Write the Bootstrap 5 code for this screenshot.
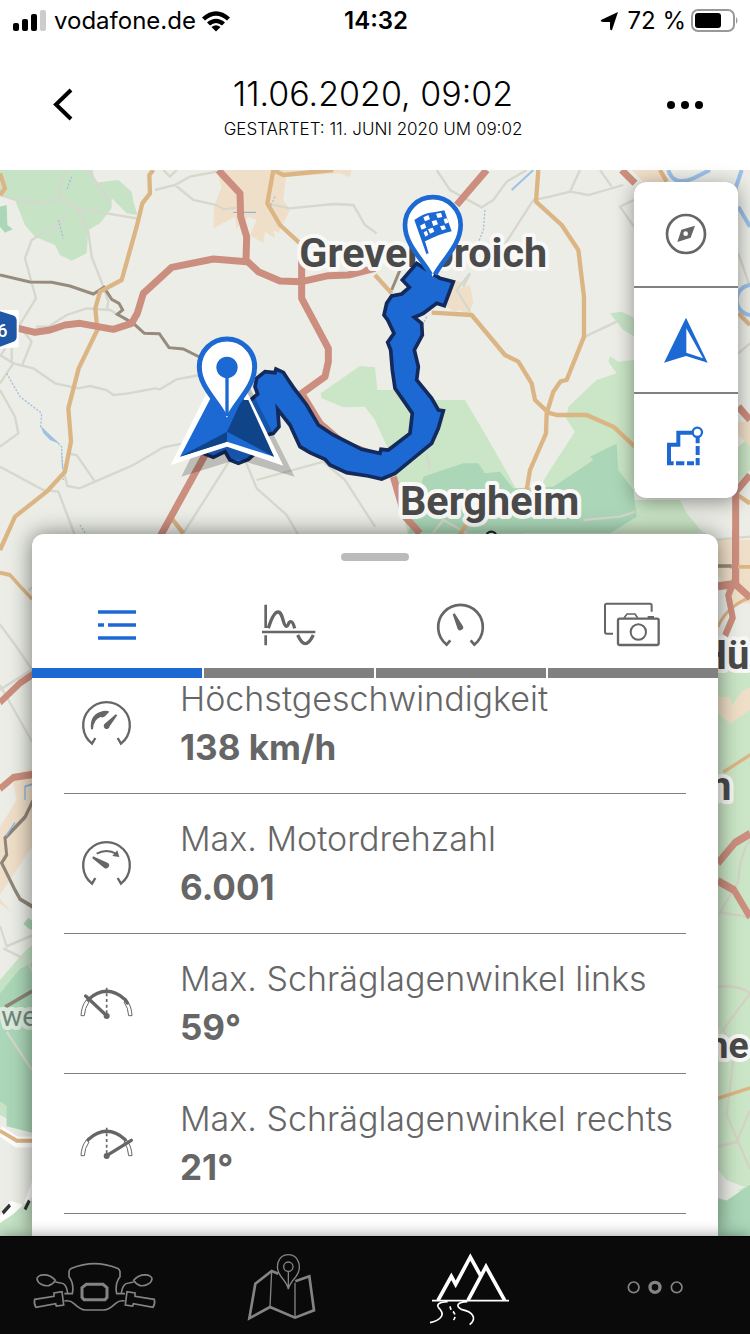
<!DOCTYPE html>
<html lang="de">
<head>
<meta charset="utf-8">
<meta name="viewport" content="width=device-width, initial-scale=1">
<title>Tour 11.06.2020</title>
<link href="https://cdn.jsdelivr.net/npm/bootstrap@5.3.0/dist/css/bootstrap.min.css" rel="stylesheet">
<style>
:root { --blue: #1c69d4; --ink: #666; --rule: #808080; }
body { font-family: Inter, "Liberation Sans", sans-serif; color: #000; background: #fff; }
svg { display: block; flex: none; }
.status-row { height: 42px; padding: 0 10px 0 12px; font-size: 24px; line-height: 42px; }
.status-row .side { flex: 1 1 0; }
.title-row { height: 128px; padding: 0 35px; }
.tour-title { font-size: 34px; line-height: 46px; font-weight: 300; }
.tour-sub { font-size: 17px; line-height: 24px; font-weight: 300; }
.plain-btn { border: 0; background: none; padding: 0; color: inherit; }
.map-area { background: #ebede6; min-height: 0; }
.map-canvas { position: absolute; inset: 0; width: 100%; height: 100%; }
.map-tools { width: 104px; margin: 12px 12px 36px; border-radius: 12px; box-shadow: 0 4px 20px rgba(0,0,0,.4); gap: 2px; background: var(--rule); }
.map-tools button { height: 104px; background: #fff; }
.sheet { margin: 0 32px; border-radius: 12px 12px 0 0; box-shadow: 0 0 22px rgba(0,0,0,.5); min-height: 0; }
.grip { width: 68px; height: 8px; border-radius: 4px; background: #bbb; margin: 19px auto 21px; }
.sheet-tabs { gap: 2px; }
.sheet-tabs button { height: 96px; border-bottom: 10px solid var(--rule); color: var(--ink); }
.sheet-tabs button.active { border-color: var(--blue); color: var(--blue); }
.stats { min-height: 0; padding: 0 32px 60px; overflow-y: auto; scrollbar-width: none; color: var(--ink); font-size: 34px; line-height: 49px; }
.stats::-webkit-scrollbar { display: none; }
.stat { padding: 20px 12px 21px; gap: 44px; border-bottom: 1px solid var(--rule); }
.stat dt { font-weight: 300; }
.stat dd { font-size: 35px; font-weight: 700; margin: 0; }
.tabbar { height: 98px; background: #0a0a0a; color: #848484; position: relative; box-shadow: 0 0 14px rgba(0,0,0,.4); border-top: 1px solid #000; }
.tabbar a { color: inherit; flex: 1 1 0; }
.tabbar a.active { color: #fff; }
.ln { fill: none; stroke: currentColor; }
.place { font-family: Roboto, "Liberation Sans", sans-serif; font-weight: 700; fill: #4a4a4a; stroke: #f8f8f6; stroke-width: 24; stroke-linejoin: round; paint-order: stroke; }
</style>
</head>
<body>
<div class="vh-100 d-flex flex-column overflow-hidden">
  <header>
    <div class="status-row d-flex align-items-center">
      <div class="side d-flex align-items-center">
        <svg width="34" height="24" viewBox="0 0 34 24"><rect x="1" y="14" width="6" height="8" rx="2"/><rect x="10" y="10" width="6" height="12" rx="2"/><rect x="19" y="5" width="6" height="17" rx="2"/><rect x="28" y="1" width="6" height="21" rx="2" fill="#ccc"/></svg>
        <span class="ms-2">vodafone.de</span>
        <svg class="ms-1" width="32" height="24" viewBox="0 0 32 24"><path d="M2 8.500Q16-4 30 8.500L27 11.500Q16 2 5 11.500ZM7 13.500Q16 6 25 13.500L22 16.500Q16 11.500 10 16.500ZM11.500 18Q16 14.500 20.500 18L16 22.500Z"/></svg>
      </div>
      <div class="fw-semibold">14:32</div>
      <div class="side d-flex align-items-center justify-content-end">
        <svg width="20" height="22" viewBox="0 0 20 22"><path d="M19 2 13 20Q11 21 11 18V12H4Q0 11 3 9.500Z"/></svg>
        <span class="ms-2 me-1">72 %</span>
        <svg width="50" height="24" viewBox="0 0 50 24"><rect x="2" y="1" width="42" height="21" rx="6" fill="none" stroke="#999" stroke-width="2"/><rect x="5" y="4" width="26" height="15" rx="3"/><path d="M46 8Q49 11.500 46 15Z" fill="#999"/></svg>
      </div>
    </div>
    <div class="title-row d-flex align-items-center justify-content-between">
      <button class="plain-btn" aria-label="Zurück"><svg width="56" height="56" viewBox="0 0 56 56"><path class="ln" d="M36 12 21 26.500 36 41" stroke-width="4"/></svg></button>
      <div class="text-center">
        <h1 class="tour-title m-0">11.06.2020, 09:02</h1>
        <div class="tour-sub text-uppercase">Gestartet: 11. Juni 2020 um 09:02</div>
      </div>
      <button class="plain-btn" aria-label="Mehr"><svg width="60" height="56" viewBox="0 0 60 56"><circle cx="16" cy="27" r="4"/><circle cx="30" cy="27" r="4"/><circle cx="44" cy="27" r="4"/></svg></button>
    </div>
  </header>

  <main class="map-area position-relative flex-grow-1 d-flex flex-column">
    <svg class="map-canvas" viewBox="0 0 2250 3198" preserveAspectRatio="xMidYMin slice" role="img" aria-label="Karte der Tour">
      <!-- woods and built-up areas -->
      <g fill="#c6e3c6">
        <path d="M0 0H278L285 38 355 30 395 65 400 95 412 135 380 130 335 85 335 115 300 160 265 180 260 250 215 272 180 255 165 225 105 200 75 165 45 90 0 75Z"/>
        <path d="M962 670 1080 588 1125 592 1132 660H1180L1300 690H1395L1460 800 1545 950 1570 1100H1225L1170 850 1125 750 1095 710 1030 712 965 685Z" fill="#cae6c6"/>
        <path d="M1705 710 1790 630 1850 610 1825 575 1830 558 1855 575 1902 570V1090H1540L1650 900 1725 785 1698 745Z" fill="#cae6c6"/>
        <path d="M1830 430 1865 425 1905 445V500L1870 480Z"/>
        <path d="M1900 990H2040L2060 1030 2110 1090H1900ZM2190 880 2215 830 2250 800V900L2200 950Z" fill="#cae6c6"/>
      </g>
      <g fill="#abd7b8">
        <path d="M0 110 20 105 22 165 38 178 15 188 0 170Z"/>
        <path d="M1270 920 1390 880 1435 880 1455 910 1500 905 1540 955 1660 950 1780 870 1770 860 1830 830 1850 822 1855 900 1900 960 1910 1040 1830 1090H1225Z"/>
      </g>
      <g fill="#f0dfc8">
        <path d="M650 0H860L850 90 870 120 835 190 820 180 825 205 795 185 790 220 750 195 770 150 745 140 710 175 705 140 640 175 642 110 665 50Z"/>
        <path d="M840 0H1055L1050 22 1020 10 850 20Z"/>
        <path d="M1300 330 1385 335 1365 360 1410 345 1420 395 1410 425 1440 455 1380 420 1360 425 1330 400Z"/>
        <path d="M1895 0H1985L2000 35 1940 45Z"/>
        <path d="M2130 1110H2250V1300H2190L2150 1200ZM2215 755H2250V830L2210 790Z"/>
      </g>
      <!-- minor roads -->
      <g fill="none" stroke="#d6d7cd" stroke-width="7">
        <path d="M0 75 50 90 130 100 180 85 230 115 410 145M180 85Q170 40 200 0M265 0 330 100M200 125 175 165 95 210 75 265 108 385 0 560M230 115 265 185 275 260 310 350 325 395 320 420M108 470 145 470 200 435 260 415 330 420 365 440M0 555 40 580 100 595 165 640 235 655 270 648 320 660 340 675 385 670 465 655 480 658 530 628 600 615M40 580 0 640M35 580V530M65 590 95 515 60 470M0 660 45 740 55 790 0 830M210 852 230 855 285 935 238 955 202 948 190 900M285 935 400 885 490 832 550 820M0 890 130 960 175 965 230 1110M690 870 550 1090M735 870 770 955 860 1035 895 1095M770 930 970 875 1035 930 1125 1070"/>
        <path d="M465 60 525 45 570 20 650 5M525 45 580 90 650 105 670 118 720 112M800 100 870 115 1000 102 1060 105 1095 165 1130 190M490 0 510 20 530 0M1310 0 1350 60 1445 112 1480 90 1520 35 1580 0M1740 0 1710 65 1650 80 1600 90 1510 230M1710 65 1765 75 1870 45M1800 0 1835 50M1390 350 1410 310 1370 360 1410 425M1755 500 1850 455M1902 90 1860 110 1902 170M2215 250 2250 350M2215 550 2250 520M1280 850 1290 900M1290 1100 1330 1050 1420 1100M1750 1050 1860 1040 1905 1025M2110 1090 2140 1110 2250 1100"/>
      </g>
      <g fill="none" stroke="#a3bfdc" stroke-width="4" stroke-dasharray="6 5"><path d="M20 610 60 680 125 730 122 770 185 830 190 930M240 1065 270 1110M215 20 200 60M175 150 190 205M825 80 810 110M1280 440 1265 470M1455 120 1450 180 1430 230"/></g>
      <path d="M122 768 150 795 180 822 150 810 130 790ZM183 830 190 895 186 895Z" fill="#9fbfe3"/>
      <path d="M700 127H768" stroke="#85a9d2" stroke-width="3"/>
      <g fill="none" stroke="#9cc0e8" stroke-width="12"><path d="M1600 0 1535 60" stroke-width="6"/><path d="M2005 0Q2020 50 2080 25L2130 0M2215 110 2250 170M2225 0 2205 60"/><circle cx="2255" cy="390" r="45"/></g>
      <!-- railway -->
      <path d="M0 315 90 336 155 337 210 348 280 372 312 352 335 388 357 400 368 420 352 433 400 460 433 490 478 491 507 533 550 537 610 567M1200 300 1175 360" fill="none" stroke="#968b7c" stroke-width="9"/>
      <!-- secondary roads -->
      <g fill="none" stroke="#dcb585" stroke-width="13" stroke-linejoin="round">
        <path d="M460 0 448 15 450 70 427 100 410 170 365 330 300 365 286 415 292 480 236 595 205 715 213 815 195 905 140 965 45 1040 0 1140M0 10 15 55 0 75M820 0 802 100 840 165 900 220M820 0 850 15 1000 0M515 1045 550 1090"/>
        <path d="M1615 0 1608 95 1685 165 1735 240 1752 380V500L1700 630 1682 634 1660 665 1640 730 1638 790 1590 900 1580 960M1125 315 1175 370M1295 428 1415 435 1515 555 1555 575 1595 640 1605 690 1645 728 1670 735H1760L1840 770 1910 835M1980 0 2000 35M2215 430 2250 465M2190 960 2250 1000M1400 1060 1370 1110"/>
      </g>
      <!-- main roads -->
      <g fill="none" stroke="#cc8e7e" stroke-width="21" stroke-linejoin="round">
        <path d="M655 0 720 70 722 140 740 200 738 270 775 305 840 333 905 335 985 317 1045 315 1125 295M740 275 640 267 515 292 430 370 412 430 395 460 340 478 240 460 195 465 150 480 105 487 55 475M905 230V385L985 535V575L975 620 905 670 960 760 1030 820 1110 850M615 855 480 1100M1180 920 1215 1040 1260 1090M1460 0 1370 105M1865 0 1905 40M2215 710 2250 750M2250 915 2207 965V1250"/>
      </g>
      <!-- left strip beside the sheet -->
      <g transform="translate(0 1080) scale(1 1.35)">
        <path d="M100 530 35 545 50 600 0 660V830L35 850 0 820V810L100 700Z" fill="#f0dfc8"/>
        <path d="M0 1000 70 940 100 920V1340L0 1300Z" fill="#c6e3c6"/><path d="M0 1030 60 975 100 960V1340L20 1325V1280L0 1270ZM70 875 85 862 100 870V890L85 885Z" fill="#abd7b8"/>
        <path d="M0 1540 60 1500 100 1490V1580H0Z" fill="#c6e3c6"/>
        <g fill="none" stroke="#d6d7cd" stroke-width="6"><path d="M0 210 50 260 96 310M0 345 96 470M0 355 96 310M0 880 20 925 100 900M10 930 80 955 100 985M20 1115 96 1200M85 135 100 125"/></g>
        <path d="M0 1335 50 1360H100" fill="none" stroke="#fff" stroke-width="24"/>
        <path d="M0 95 30 100 60 125 96 153M0 1335 50 1357H100" fill="none" stroke="#dcb585" stroke-width="9"/>
        <path d="M0 383 60 340 100 320M0 575 40 550 100 543" fill="none" stroke="#cc8e7e" stroke-width="16"/>
        <path d="M100 600 75 638 15 685 20 722 5 740 45 800 60 820 100 838M15 1060 96 1025" fill="none" stroke="#8f8679" stroke-width="9"/>
        <path d="M18 680 45 650M75 600V570L96 565" stroke="#8db4e4" stroke-width="4" fill="none"/>
        <path d="M0 1525 30 1490 70 1500 100 1440V1480L40 1520 0 1540Z" fill="#fff"/><path d="M8 1518 30 1500M75 1510 88 1490" stroke="#333" stroke-width="9" fill="none"/>
      </g>
      <!-- right strip beside the sheet -->
      <g transform="translate(2130 1080) scale(1 1.35)">
        <path d="M0 310H120V1480L0 1440Z" fill="#cae6c6"/><path d="M0 1480 50 1490 120 1455V1580H0Z" fill="#abd7b8"/>
        <path d="M20 370 60 372 65 390 100 355 120 350V400L60 430 20 405Z" fill="#f0dfc8"/><path d="M22 1420 50 1445 105 1460 65 1475 22 1470Z" fill="#ebede6"/>
        <g fill="none" stroke="#d5d2c5" stroke-width="6"><path d="M120 690Q90 720 85 780L30 850 120 860M24 1015Q90 1010 120 1030L40 1110 70 1180 50 1300 120 1420M24 1370 80 1360 120 1290"/></g>
        <path d="M24 215Q50 170 120 150M40 538 120 500M24 1263 120 1240M60 82H120" fill="none" stroke="#dcb585" stroke-width="8"/><path d="M24 80H65" stroke="#968b7c" stroke-width="8"/>
        <path d="M24 125 75 120 120 150M75 0V110L55 145 68 195 45 235M24 740 75 695 120 675M24 780 72 800 120 860" fill="none" stroke="#cc8e7e" stroke-width="18"/>
      </g>
      <g class="place">
        <text x="898" y="290" font-size="124">Grevenbroich</text>
        <text x="1200" y="1034" font-size="124">Bergheim</text>
        <text x="2248" y="1496" text-anchor="end" font-size="120">Hü</text>
        <text x="2194" y="1890" text-anchor="end" font-size="120">n</text>
        <text x="2246" y="2664" text-anchor="end" font-size="112">he</text>
        <text x="4" y="2568" font-size="84" font-weight="400" fill="#6f8a7b" stroke="#dcebdd">we</text>
      </g>
      <circle cx="1474" cy="1100" r="15" fill="#eee" stroke="#222" stroke-width="7"/>
      <path d="M0 420H56V532L0 536Z" fill="#fff"/><path d="M0 424 38 436Q50 440 50 452V500Q50 512 38 516L0 530Z" fill="#1d57a5"/>
      <text x="-8" y="500" font-size="54" font-family="Roboto, sans-serif" font-weight="500" fill="#fff">6</text>
      <!-- recorded track -->
      <path d="M610 850 640 862 675 845 690 870 715 880 745 868 765 850 800 795 820 790 837 770 833 718 870 765 900 830 930 848 975 868 990 885 1040 908 1105 918 1145 927 1185 910 1240 865 1295 820 1315 775 1330 722 1315 720 1295 685 1250 630 1255 590 1243 540 1267 495 1265 460 1243 442 1270 430 1310 400 1333 407 1360 335 1320 325 1250 280 1207 330 1228 352 1205 372 1175 378 1160 400 1152 435 1163 450 1182 490 1163 517 1172 540 1177 600 1185 655 1237 730 1230 790 1165 840 1143 838 1140 850 1085 838 1000 795 955 765 920 705 880 652 865 630 850 607 828 597 825 608 795 605 770 625 765 650 773 672 740 700Z" fill="#1c69d4" stroke="#142a5c" stroke-width="11"/>
      <!-- current position -->
      <path d="M713 580 544 920 713 868 884 920Z" fill="#000" opacity=".2"/>
      <path d="M681 545 512 885 681 830 850 887Z" fill="#fff"/>
      <path d="M681 590 540 860 681 815 822 860Z" fill="#1c69d4"/>
      <path d="M540 860 681 785V815ZM745 690 822 860 681 785 725 690Z" fill="#104488"/>
      <!-- start and finish pins -->
      <g>
        <path d="M681 743C665 706 598 660 598 590A83 83 0 0 1 764 590C764 660 697 706 681 743Z" fill="#fff"/>
        <path d="M674 738C650 690 598 650 598 590A83 83 0 0 1 764 590C764 650 712 690 688 738" fill="none" stroke="#1c69d4" stroke-width="15"/>
        <path d="M681 600V738" stroke="#1c69d4" stroke-width="10"/><circle cx="681" cy="592" r="32" fill="#1c69d4"/>
      </g>
      <g transform="translate(1125 0)">
        <path d="M173 320C155 280 90 232 90 165A83 83 0 0 1 257 165C257 232 192 280 173 320Z" fill="#fff"/>
        <path d="M167 314C143 268 90 225 90 165A83 83 0 0 1 257 165C257 225 204 268 180 314" fill="none" stroke="#1c69d4" stroke-width="14"/>
        <path d="M118 150Q145 130 165 128T208 121L230 184Q205 190 190 196T150 214L161 250 154 252Z" fill="#1c69d4"/>
        <path d="M145 142 160 135 165 148 150 154ZM183 131 198 128 202 141 188 144ZM135 167 149 160 154 173 140 179ZM170 154 184 150 189 163 175 168ZM206 147 216 145 221 158 210 161ZM159 178 173 173 178 185 165 191ZM195 169 208 166 213 177 201 181ZM146 187 155 182 160 194 151 200Z" fill="#fff"/>
      </g>
    </svg>

    <div class="map-tools d-flex flex-column align-self-end overflow-hidden position-relative flex-shrink-0">
      <button class="plain-btn d-flex align-items-center justify-content-center" aria-label="Kompass"><svg width="60" height="60" viewBox="843 102 180 180"><circle cx="933" cy="192" r="57" fill="none" stroke="#666" stroke-width="8"/><path d="M960 167 907 216 919 179ZM960 167 947 203 907 216Z" fill="#666"/><circle cx="932" cy="191" r="9" fill="#fff" stroke="#666" stroke-width="4"/></svg></button>
      <button class="plain-btn d-flex align-items-center justify-content-center" aria-label="Position"><svg width="60" height="60" viewBox="843 420 180 180"><path d="M933 443 998 578 933 558 867 578ZM934 475V548L984 565Z" fill="#1c69d4" fill-rule="evenodd"/></svg></button>
      <button class="plain-btn d-flex align-items-center justify-content-center" aria-label="Strecke"><svg width="60" height="60" viewBox="843 738 180 180" fill="none" stroke="#1c69d4" stroke-width="12"><path d="M952 788H910V824H882V880H896M903 880H928M936 880H957M962 880H968V864M968 855V828M968 820V802"/><circle cx="967" cy="787" r="14" stroke-width="7"/></svg></button>
    </div>

    <section class="sheet bg-white position-relative d-flex flex-column flex-grow-1">
      <div class="grip flex-shrink-0"></div>
      <div class="sheet-tabs d-flex flex-shrink-0" role="tablist">
        <button class="plain-btn active flex-fill d-flex align-items-center justify-content-center" role="tab" aria-selected="true" aria-label="Liste"><svg width="60" height="52" viewBox="165 210 180 156"><path class="ln" d="M198 249H312M198 288H216M228 288H312M198 327H312" stroke-width="11"/></svg></button>
        <button class="plain-btn flex-fill d-flex align-items-center justify-content-center" role="tab" aria-selected="false" aria-label="Diagramm"><svg width="60" height="52" viewBox="681 210 180 156"><path class="ln" d="M701 227V297M701 319V349M690 309H850" stroke-width="8"/><path class="ln" d="M709 298Q724 249 738 249C754 249 752 292 764 292C770 292 768 278 776 278Q783 278 788 298M797 318Q809 344 820 344T844 318" stroke-width="10"/></svg></button>
        <button class="plain-btn flex-fill d-flex align-items-center justify-content-center" role="tab" aria-selected="false" aria-label="Tacho"><svg width="60" height="52" viewBox="123 210 180 156"><path class="ln" d="M181 334 170 347A67 67 0 1 1 253 347L242 334" stroke-width="8"/><path d="M188 256 194 253 218 290A9 9 0 1 1 203 300Z" fill="currentColor"/></svg></button>
        <button class="plain-btn flex-fill d-flex align-items-center justify-content-center" role="tab" aria-selected="false" aria-label="Fotos"><svg width="60" height="52" viewBox="639 210 180 156"><path class="ln" d="M669 314H650Q645 314 645 309V229Q645 224 650 224H780Q785 224 785 229V248" stroke-width="6"/><rect class="ln" x="684" y="269" width="122" height="79" rx="5" stroke-width="7"/><path class="ln" d="M702 267 711 255H735L743 267" stroke-width="5"/><path class="ln" d="M773 265H792" stroke-width="8"/><circle class="ln" cx="745" cy="309" r="23" stroke-width="6"/></svg></button>
      </div>
      <dl class="stats m-0 flex-grow-1" id="stats">
        <div class="stat d-flex align-items-center">
          <svg width="60" height="60" viewBox="132 492 180 180"><path class="ln" d="M190 627 180 644A70 70 0 1 1 267 644L257 627" stroke-width="7"/><path d="M177 601Q172 560 204 549 222 542 232 548L219 562Q213 567 206 564 184 572 183 601ZM251 556 256 559 233 592A9 9 0 1 1 220 583Z" fill="currentColor"/></svg>
          <div><dt>Höchstgeschwindigkeit</dt><dd>138 km/h</dd></div>
        </div>
        <div class="stat d-flex align-items-center">
          <svg width="60" height="60" viewBox="228 102 180 180"><path class="ln" d="M286 237 276 254A70 70 0 1 1 363 254L353 237" stroke-width="7"/><path class="ln" d="M290 164Q320 147 350 165" stroke-width="6"/><path d="M352 154 358 174 337 171ZM279 172 324 192A9 9 0 1 1 312 206L277 178Z" fill="currentColor"/></svg>
          <div><dt>Max. Motordrehzahl</dt><dd>6.001</dd></div>
        </div>
        <div class="stat d-flex align-items-center">
          <svg width="60" height="60" viewBox="228 522 180 180"><path class="ln" d="M243 650Q244 622 259 603L267 609Q254 627 253 650ZM396 650Q395 622 380 603L372 609Q385 627 386 650Z" stroke-width="3"/><path class="ln" d="M264 602Q320 552 376 602L382 612M257 591 320 650" stroke-width="10" stroke-linecap="round"/><path class="ln" d="M320 566V645" stroke-width="5" stroke-dasharray="9 8"/><circle cx="320" cy="651" r="9" fill="currentColor"/></svg>
          <div><dt>Max. Schräglagenwinkel links</dt><dd>59°</dd></div>
        </div>
        <div class="stat d-flex align-items-center">
          <svg width="60" height="60" viewBox="228 942 180 180"><path class="ln" d="M243 1070Q244 1042 259 1023L267 1029Q254 1047 253 1070ZM396 1070Q395 1042 380 1023L372 1029Q385 1047 386 1070Z" stroke-width="3"/><path class="ln" d="M264 1022Q320 972 376 1022M320 1070 394 1024" stroke-width="10" stroke-linecap="round"/><path class="ln" d="M320 986V1065" stroke-width="5" stroke-dasharray="9 8"/><circle cx="320" cy="1071" r="9" fill="currentColor"/></svg>
          <div><dt>Max. Schräglagenwinkel rechts</dt><dd>21°</dd></div>
        </div>
      </dl>
    </section>
  </main>

  <nav class="tabbar d-flex flex-shrink-0" aria-label="Hauptnavigation">
    <a href="#" class="d-flex align-items-center justify-content-center" aria-label="Motorrad"><svg width="130" height="90" viewBox="86 30 390 270"><g class="ln" stroke-width="5"><path d="M192 188H216Q222 158 206 137V122Q207 115 214 112Q282 84 351 112Q358 115 359 122V137Q343 158 349 188H374M192 210Q210 207 220 217 242 237 255 237H310Q325 237 346 217 358 207 373 210M202 186Q198 156 181 156L165 153M363 186Q367 156 386 156L400 153"/><path d="M165 148C145 124 110 130 110 144C112 158 130 166 145 164Q158 160 165 148ZM400 148C420 124 455 130 455 144C453 158 435 166 420 164Q407 160 400 148ZM103 205 161 196V186L185 182 190 222 168 225 166 218 107 229Q100 218 103 205ZM462 205 404 196V186L380 182 375 222 397 225 399 218 458 229Q465 218 462 205Z"/></g><path class="ln" d="M258 160H308L320 170V199L314 206H251L245 199V170Z" stroke-width="9"/></svg></a>
    <a href="#" class="d-flex align-items-center justify-content-center" aria-label="Karte"><svg width="80" height="90" viewBox="724 30 240 270"><path class="ln" d="M836 128 816 120 767 158 749 262 811 228 886 260 943 238 929 136 887 151" stroke-width="8"/><path class="ln" d="M816 120 811 228M886 155V260M866 174Q862 158 845 138C822 108 836 71 866 71S910 108 888 138Q870 158 866 174ZM866 122V172" stroke-width="4"/><circle class="ln" cx="866" cy="107" r="14" stroke-width="4"/></svg></a>
    <a href="#" class="active d-flex align-items-center justify-content-center" aria-label="Touren" aria-current="page"><svg width="80" height="90" viewBox="161 30 240 270"><path class="ln" d="M188 208 228 136 241 160 285 78 317 136M278 208 332 107 388 208" stroke-width="11"/><path class="ln" d="M170 209H405" stroke-width="5"/><path class="ln" d="M217 212C182 214 183 225 195 236 210 255 191 269 164 275M276 212C245 213 239 226 260 236 289 242 308 259 283 281" stroke-width="5"/><path class="ln" d="M224 226Q226 238 234 242 246 258 230 272" stroke-width="5" stroke-dasharray="11 7"/></svg></a>
    <a href="#" class="d-flex align-items-center justify-content-center" aria-label="Mehr"><svg width="80" height="90" viewBox="724 30 240 270"><circle class="ln" cx="777" cy="169" r="16" stroke-width="5"/><circle class="ln" cx="841" cy="169" r="15" stroke-width="10"/><circle class="ln" cx="906" cy="169" r="16" stroke-width="5"/></svg></a>
  </nav>
</div>
<script src="https://cdn.jsdelivr.net/npm/bootstrap@5.3.0/dist/js/bootstrap.bundle.min.js"></script>
<script>document.getElementById('stats').scrollTop = 24;</script>
</body>
</html>
